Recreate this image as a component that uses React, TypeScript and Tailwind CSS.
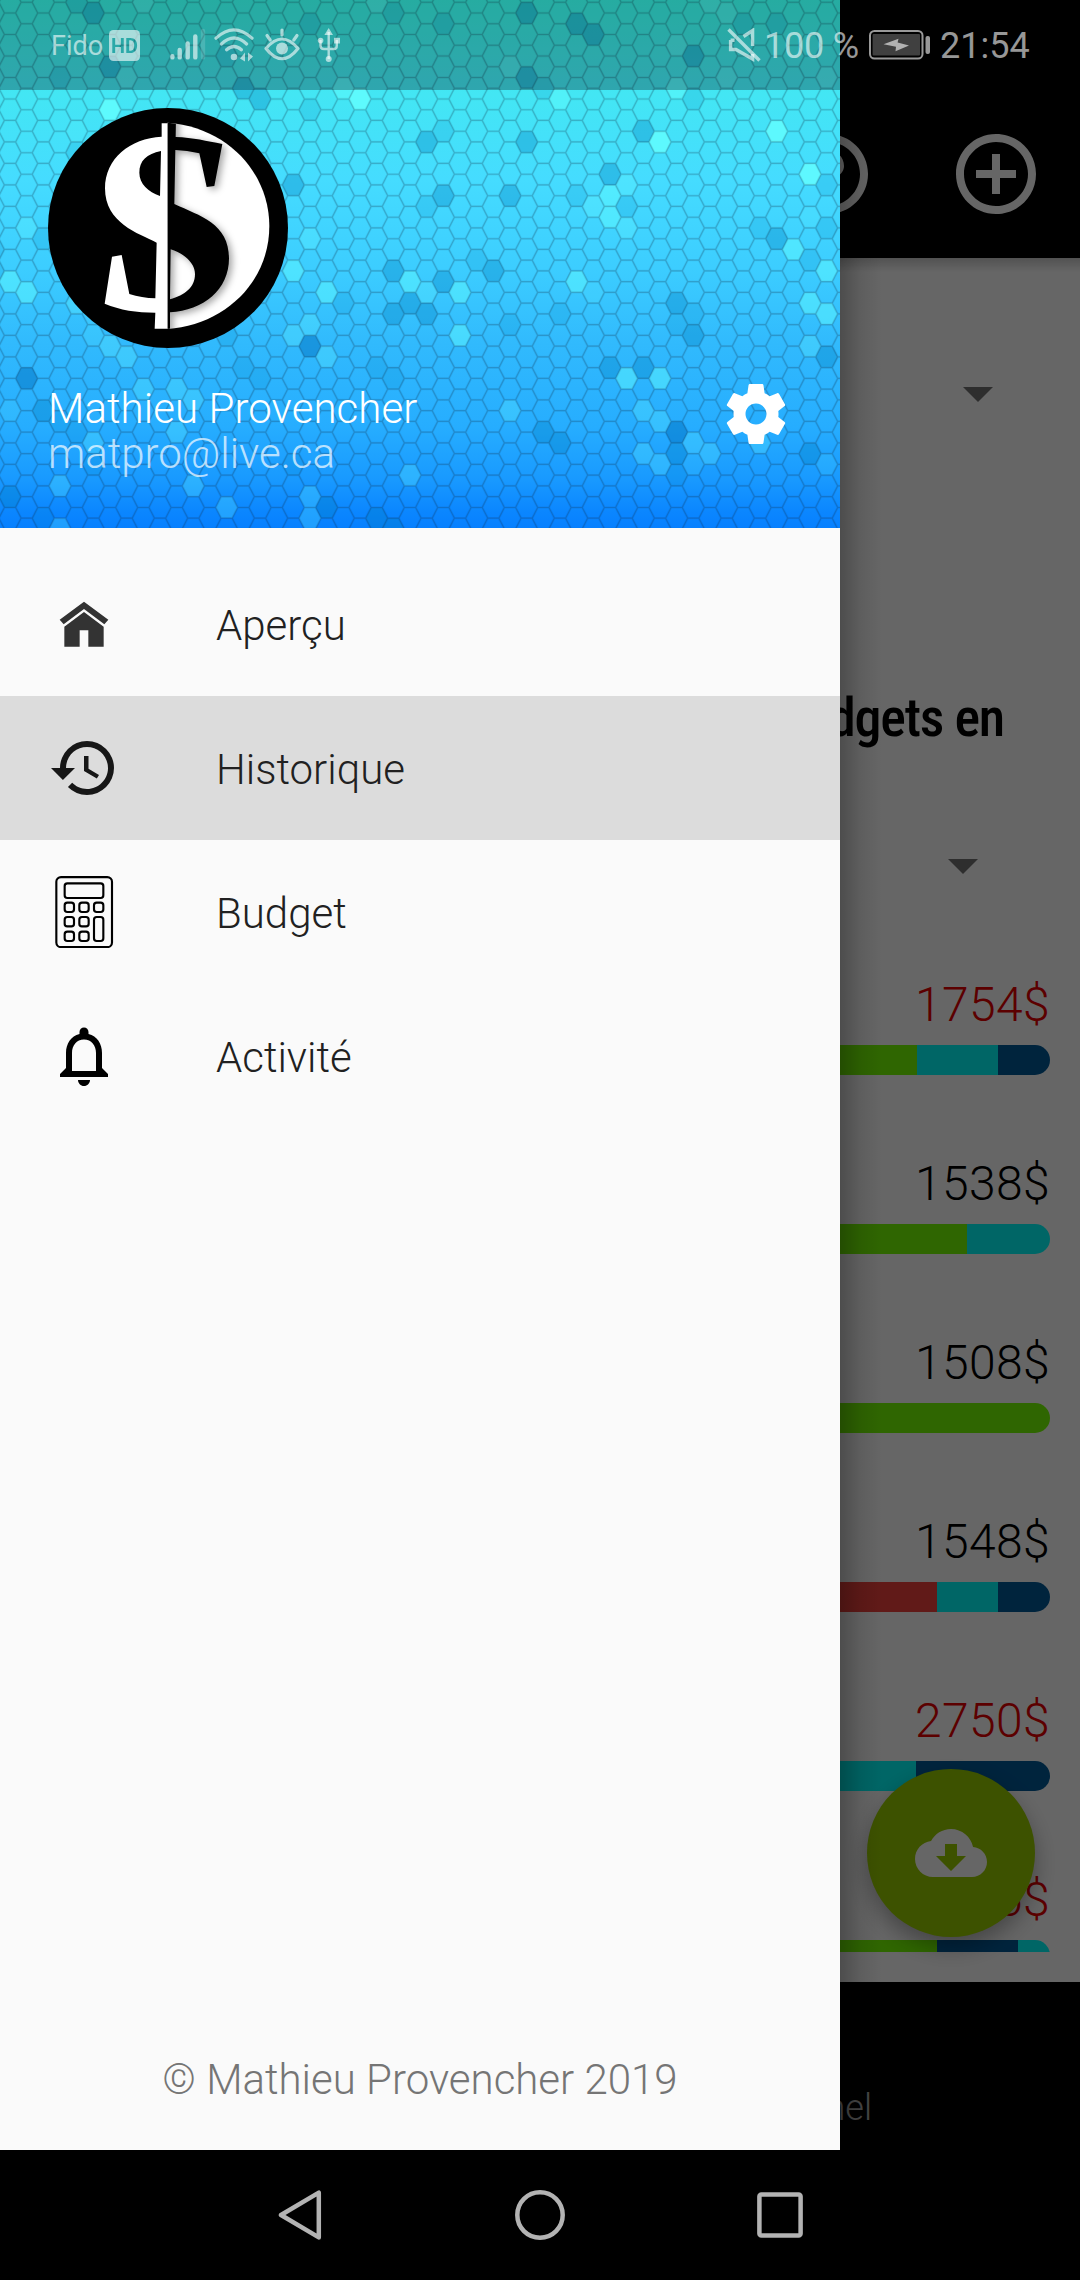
import React from "react";

type Tone = "d1" | "d2" | "d3" | "l0" | "l1" | "l2" | "l3";

const COL = 50 / 3;
const ROW = 21.5;

const toneFill: Record<Tone, string> = {
  d1: "rgba(0,130,190,0.16)",
  d2: "rgba(0,125,190,0.32)",
  d3: "rgba(0,110,190,0.48)",
  l0: "rgba(110,255,255,0.12)",
  l1: "rgba(110,255,255,0.24)",
  l2: "rgba(100,255,255,0.45)",
  l3: "rgba(100,255,255,0.8)",
};

/* Approximate centres of the cells that differ from the gradient. */
const cells: Record<Tone, number[][]> = {
  d1: [
    [77, 3], [310, 24], [393, 13], [60, 78], [227, 57], [310, 110], [77, 152], [43, 238], [-7, 249],
    [443, 24], [777, 24], [743, 24], [543, 88], [693, 99], [443, 130], [627, 207], [427, 206],
    [577, 196], [827, 185], [760, 228], [827, 227], [810, 260], [477, 260], [-7, 270], [343, 302],
    [227, 337], [243, 367], [260, 378], [377, 367], [393, 378], [77, 432], [60, 423], [93, 463],
    [293, 463], [43, 518], [510, 323], [560, 313], [693, 313], [677, 323], [677, 473],
  ],
  d2: [
    [93, 13], [110, 68], [243, 88], [260, 99], [293, 185], [527, 13], [577, 24], [593, 35], [693, 56],
    [527, 78], [643, 130], [427, 142], [527, 142], [610, 174], [443, 196], [510, 196], [777, 238],
    [493, 268], [393, 270], [443, 281], [410, 302], [393, 312], [427, 312], [43, 410], [327, 507],
    [377, 518], [393, 527], [10, 497], [677, 303], [693, 335], [610, 367], [643, 367], [543, 432],
    [560, 442], [677, 453], [827, 357], [810, 453],
  ],
  d3: [[310, 346], [27, 378], [677, 432]],
  l0: [
    [77, 132], [810, 217], [10, 410], [593, 293], [693, 463], [827, 463], [93, 317], [93, 335],
  ],
  l1: [
    [143, 3], [127, 78], [377, 3], [27, 228], [310, 237], [710, 3], [727, 13], [677, 46], [510, 68],
    [727, 78], [827, 78], [627, 185], [593, 207], [627, 228], [427, 292], [310, 323], [293, 334],
    [327, 357], [77, 302], [110, 346], [127, 357], [143, 388], [177, 388], [193, 398], [177, 430],
    [93, 440], [60, 485], [193, 485], [410, 475], [227, 507], [310, 497], [310, 518], [60, 527],
    [810, 345], [510, 410], [643, 410], [660, 421], [693, 442], [643, 453], [660, 464], [710, 453],
    [760, 447],
  ],
  l2: [
    [343, 88], [677, 88], [560, 99], [610, 196], [610, 217], [793, 249], [827, 269], [10, 281],
    [27, 292], [293, 270], [327, 292], [410, 281], [460, 293], [577, 282], [460, 336], [627, 378],
    [660, 378], [810, 303], [827, 313],
  ],
  l3: [[110, 110], [360, 99], [660, 142], [777, 130], [810, 174]],
};

const originY = (c: number) => (Math.abs(c) % 2 === 0 ? 88.2 : 98.9) - 5 * ROW;

function hexAt(cx: number, cy: number) {
  const f = (n: number) => n.toFixed(1);
  return `M${f(cx - 11.1)} ${f(cy)}L${f(cx - 5.6)} ${f(cy - 10.75)}H${f(cx + 5.6)}L${f(cx + 11.1)} ${f(cy)}L${f(cx + 5.6)} ${f(cy + 10.75)}H${f(cx - 5.6)}Z`;
}

function snapped([x, y]: number[]) {
  const c = Math.round((x - 10) / COL);
  const r = Math.round((y - originY(c)) / ROW);
  return hexAt(10 + c * COL, originY(c) + r * ROW);
}

/* Three edges per cell are enough to draw the whole mesh. */
const mesh = (() => {
  let d = "";
  for (let c = -1; c < 51; c++) {
    for (let r = 0; r < 27; r++) {
      const x = 10 + c * COL;
      const y = originY(c) + r * ROW;
      d += `M${(x + 5.6).toFixed(1)} ${(y - 10.75).toFixed(1)}H${(x - 5.6).toFixed(1)}L${(x - 11.1).toFixed(1)} ${y.toFixed(1)}L${(x - 5.6).toFixed(1)} ${(y + 10.75).toFixed(1)}`;
    }
  }
  return d;
})();

function HoneycombBackdrop() {
  return (
    <svg className="absolute inset-0" width="840" height="528" viewBox="0 0 840 528">
      <defs>
        <linearGradient id="sky" x1="0" y1="0" x2="0" y2="1">
          <stop offset="0" stopColor="#35efe0" />
          <stop offset="0.18" stopColor="#43e6f4" />
          <stop offset="0.34" stopColor="#45dcff" />
          <stop offset="0.51" stopColor="#3ccdff" />
          <stop offset="0.65" stopColor="#31bafd" />
          <stop offset="0.81" stopColor="#26adff" />
          <stop offset="0.91" stopColor="#1899ff" />
          <stop offset="0.97" stopColor="#0b86ff" />
          <stop offset="1" stopColor="#0780ff" />
        </linearGradient>
      </defs>
      <rect width="840" height="528" fill="url(#sky)" />
      {(Object.keys(cells) as Tone[]).map((tone) => (
        <path key={tone} d={cells[tone].map(snapped).join("")} fill={toneFill[tone]} />
      ))}
      <path d={mesh} fill="none" stroke="rgba(20,50,80,0.08)" strokeWidth="2.4" />
      <path d={mesh} fill="none" stroke="rgba(20,40,60,0.2)" strokeWidth="1.1" />
    </svg>
  );
}

function Avatar() {
  return (
    <svg width="240" height="240" viewBox="144 54 720 720">
      <defs>
        <clipPath id="moon">
          <path d="M502 98C690 112 808 255 808 408C808 580 670 705 502 717Z" />
        </clipPath>
        <filter id="soft" x="-20%" y="-20%" width="150%" height="150%">
          <feDropShadow dx="10" dy="8" stdDeviation="11" floodColor="#000" floodOpacity="0.35" />
        </filter>
      </defs>
      <circle cx="504" cy="414" r="360" fill="#000" />
      <path d="M502 98C690 112 808 255 808 408C808 580 670 705 502 717Z" fill="#fff" />
      <g clipPath="url(#moon)">
        <path
          filter="url(#soft)"
          d="M480 80H528L527 141C580 143 620 153 667 162L643 288L620 291L598 190Q560 181 526 180L523 342C600 378 687 400 687 505C687 600 610 662 510 667L510 730H480Z M512 478L510 628C555 615 585 592 585 552C585 518 550 490 512 478Z"
          fillRule="evenodd"
          fill="#000"
        />
      </g>
      <path
        d="M485 100H502V716H464L466 668C410 668 360 660 314 641L336 500L365 495L388 612Q425 624 466 625L470 458C415 430 315 400 315 295C315 205 390 145 485 140Z M483 183C440 192 418 212 418 248C418 282 445 305 480 318Z"
        fillRule="evenodd"
        fill="#fff"
      />
    </svg>
  );
}

function Icon({ d, size, className }: { d: string; size: number; className?: string }) {
  return (
    <svg width={size} height={size} viewBox="0 0 24 24" fill="currentColor" className={className}>
      <path d={d} />
    </svg>
  );
}

const paths = {
  help: "M11 18h2v-2h-2v2zm1-16C6.48 2 2 6.48 2 12s4.48 10 10 10 10-4.48 10-10S17.52 2 12 2zm0 18c-4.41 0-8-3.59-8-8s3.59-8 8-8 8 3.59 8 8-3.59 8-8 8zm0-14c-2.21 0-4 1.79-4 4h2c0-1.1.9-2 2-2s2 .9 2 2c0 2-3 1.75-3 5h2c0-2.25 3-2.5 3-5 0-2.21-1.79-4-4-4z",
  add: "M13 7h-2v4H7v2h4v4h2v-4h4v-2h-4V7zm-1-5C6.48 2 2 6.48 2 12s4.48 10 10 10 10-4.48 10-10S17.52 2 12 2zm0 18c-4.41 0-8-3.59-8-8s3.59-8 8-8 8 3.59 8 8-3.59 8-8 8z",
  cloud: "M19.35 10.04C18.67 6.59 15.64 4 12 4 9.11 4 6.6 5.64 5.35 8.04 2.34 8.36 0 10.91 0 14c0 3.31 2.69 6 6 6h13c2.76 0 5-2.24 5-5 0-2.64-2.05-4.78-4.65-4.96zM17 13l-5 5-5-5h3V9h4v4h3z",
  gear: "M19.43 12.98c.04-.32.07-.64.07-.98s-.03-.66-.07-.98l2.11-1.65c.19-.15.24-.42.12-.64l-2-3.46c-.12-.22-.39-.3-.61-.22l-2.49 1c-.52-.4-1.08-.73-1.69-.98l-.38-2.65C14.46 2.18 14.25 2 14 2h-4c-.25 0-.46.18-.49.42l-.38 2.65c-.61.25-1.17.59-1.69.98l-2.49-1c-.23-.09-.49 0-.61.22l-2 3.46c-.13.22-.07.49.12.64l2.11 1.65c-.04.32-.07.65-.07.98s.03.66.07.98l-2.11 1.65c-.19.15-.24.42-.12.64l2 3.46c.12.22.39.3.61.22l2.49-1c.52.4 1.08.73 1.69.98l.38 2.65c.03.24.24.42.49.42h4c.25 0 .46-.18.49-.42l.38-2.65c.61-.25 1.17-.59 1.69-.98l2.49 1c.23.09.49 0 .61-.22l2-3.46c.12-.22.07-.49-.12-.64l-2.11-1.65zM12 15.5c-1.93 0-3.5-1.57-3.5-3.5s1.57-3.5 3.5-3.5 3.5 1.57 3.5 3.5-1.57 3.5-3.5 3.5z",
  history: "M13 3a9 9 0 0 0-9 9H1l3.89 3.89.07.14L9 12H6c0-3.87 3.13-7 7-7s7 3.13 7 7-3.13 7-7 7c-1.93 0-3.68-.79-4.94-2.06l-1.42 1.42A8.954 8.954 0 0 0 13 21a9 9 0 0 0 0-18zm-1 5v5l4.28 2.54.72-1.21-3.5-2.08V8H12z",
  bell: "M12 22c1.1 0 2-.9 2-2h-4c0 1.1.9 2 2 2zm6-6v-5c0-3.07-1.63-5.64-4.5-6.32V4c0-.83-.67-1.5-1.5-1.5s-1.5.67-1.5 1.5v.68C7.64 5.36 6 7.92 6 11v5l-2 2v1h16v-1l-2-2zm-2 1H8v-6c0-2.48 1.51-4.5 4-4.5s4 2.02 4 4.5v6z",
};

function HomeIcon() {
  return (
    <svg width="72" height="72" viewBox="0 0 216 216" fill="#333333">
      <path d="M108 41L181 95L169 109L108 63L47 109L35 95Z" />
      <path d="M108 72L167 116V176H121V127H95V176H49V116Z" />
    </svg>
  );
}

function CalculatorIcon() {
  const keys = [
    [47, 77, 34, 34], [91, 77, 34, 34], [135, 77, 34, 34],
    [47, 120, 34, 34], [91, 120, 34, 34], [135, 120, 34, 78],
    [47, 164, 34, 34], [91, 164, 34, 34],
  ];
  return (
    <svg width="72" height="72" viewBox="0 0 216 216" fill="none" stroke="#000" strokeWidth="6.4">
      <rect x="25" y="3.2" width="167" height="210" rx="14" />
      <rect x="50" y="22" width="116" height="44" rx="8" />
      {keys.map(([x, y, w, h]) => (
        <rect key={`${x}-${y}`} x={x + 3} y={y + 3} width={w - 6} height={h - 6} rx="8" />
      ))}
    </svg>
  );
}

const menu = [
  { label: "Aperçu", icon: <HomeIcon /> },
  { label: "Historique", icon: <Icon d={paths.history} size={72} className="text-[#171717]" />, active: true },
  { label: "Budget", icon: <CalculatorIcon /> },
  { label: "Activité", icon: <Icon d={paths.bell} size={72} className="text-black" /> },
];

function StatusBar() {
  return (
    <div className="absolute inset-x-0 top-0 flex h-[90px] items-center text-white/60">
      <div className="flex h-full w-[840px] items-center bg-black/[0.28] pl-[51px]">
        <span className="w-[58px] pt-0.5 text-[27px] leading-[88px]">Fido</span>
        <svg width="31" height="31" viewBox="0 0 31 31" className="opacity-60">
          <mask id="hd">
            <rect width="31" height="31" rx="4.5" fill="#fff" />
            <text x="15.5" y="22.8" textAnchor="middle" textLength="27" lengthAdjust="spacingAndGlyphs" fontFamily="Roboto" fontWeight="700" fontSize="21" fill="#000">
              HD
            </text>
          </mask>
          <rect width="31" height="31" fill="#fff" mask="url(#hd)" />
        </svg>
        <svg width="36" height="34" viewBox="0 0 36 34" className="ml-[30px]" fill="currentColor" stroke="currentColor" strokeWidth="4.4" strokeLinecap="round">
          <path fill="none" d="M2.4 28.3V29.4M9.7 22V29.4M17.7 15.5V29.4M25.3 8.5V29.4" />
          <path fill="none" opacity="0.25" d="M33 3V29.4" />
        </svg>
        <svg width="40" height="36" viewBox="0 0 40 36" className="ml-[8px]" fill="none" stroke="currentColor" strokeWidth="3.2" strokeLinecap="round">
          <path d="M2 11.2Q20 -5.5 38 11.2M7.4 17Q20 5 32.6 17M12.6 22.8Q20 16.2 27.4 22.8" />
          <circle cx="20" cy="30" r="3.3" fill="currentColor" stroke="none" />
          <path d="M31 25.5V34.5L26 31.5ZM34 34.5V25.5L39 29.5Z" fill="currentColor" stroke="none" />
        </svg>
        <svg width="36" height="34" viewBox="0 0 36 34" className="ml-[10px]" fill="none" stroke="currentColor" strokeWidth="3.2" strokeLinecap="round">
          <path d="M2 20.5Q18 1.5 34 20.5Q18 41 2 20.5Z" strokeLinejoin="round" />
          <circle cx="18" cy="20.5" r="6" fill="currentColor" stroke="none" />
          <path d="M18 2V7M3 7.5L6.2 12M33 7.5L29.8 12" />
        </svg>
        <svg width="24" height="34" viewBox="0 0 24 34" className="ml-[17px]" fill="none" stroke="currentColor" strokeWidth="2.4">
          <path d="M11.7 4V31M3.5 12V17.5Q3.5 21 7 21H17Q19.8 21 19.8 17.5V12" />
          <path d="M11.7 0L16 7H7.4Z" fill="currentColor" stroke="none" />
          <circle cx="11.7" cy="31" r="3" fill="currentColor" stroke="none" />
          <circle cx="3.6" cy="12.6" r="2.8" fill="currentColor" stroke="none" />
          <path d="M17 9.8H23V15.5H17Z" fill="currentColor" stroke="none" />
        </svg>
        <svg width="34" height="34" viewBox="0 0 34 34" className="ml-[386px]" fill="none" stroke="currentColor" strokeWidth="3.4">
          <path d="M1.5 1.5L32.5 32.5" />
          <path d="M16.5 8.5L25.6 2.5V18M3.6 12V21.5H9L25.6 31V26M3.6 12.2H7.6" />
        </svg>
      </div>
      <div className="-ml-[76px] flex items-center">
        <span className="w-[105px] pt-0.5 text-[36px] leading-[88px] -tracking-[0.2px]">100 %</span>
        <svg width="62" height="30" viewBox="0 0 62 30" fill="none">
          <rect x="1" y="1" width="52.5" height="27.5" rx="4.5" stroke="currentColor" strokeWidth="2" />
          <rect x="3.6" y="4" width="47.4" height="21.5" rx="1" fill="#fff" fillOpacity="0.25" />
          <path d="M14.5 14.2L29.5 8.8L28.6 12.6L40 15.6L26.5 21.2L27 16.8Z" fill="currentColor" />
          <rect x="56.5" y="6" width="4.5" height="18" rx="2" fill="currentColor" />
        </svg>
        <span className="ml-[9px] pt-0.5 text-[36px] leading-[88px]">21:54</span>
      </div>
    </div>
  );
}

type Segment = [string, number];

const budgets: { amount: string; over?: boolean; segments: Segment[] }[] = [
  { amount: "1754$", over: true, segments: [["#76ff03", 887], ["#00ffff", 81], ["#005a99", 52]] },
  { amount: "1538$", segments: [["#76ff03", 937], ["#00ffff", 83]] },
  { amount: "1508$", segments: [["#76ff03", 1020]] },
  { amount: "1548$", segments: [["#f2433c", 907], ["#00ffff", 61], ["#005a99", 52]] },
  { amount: "2750$", over: true, segments: [["#00ffff", 886], ["#005a99", 134]] },
  { amount: "1656$", over: true, segments: [["#76ff03", 907], ["#005a99", 81], ["#00ffff", 32]] },
];

function Caret() {
  return (
    <svg width="30" height="15" viewBox="0 0 30 15">
      <path d="M0 0H30L15 15Z" fill="#747474" />
    </svg>
  );
}

function BudgetScreen() {
  return (
    <div className="flex h-[2150px] flex-col bg-white">
      <div className="flex h-[258px] items-end justify-end gap-[72px] bg-black pr-9 pb-9 text-white">
        <Icon d={paths.help} size={96} />
        <Icon d={paths.add} size={96} />
      </div>
      <div className="h-[14px] shrink-0 bg-linear-to-b from-black/20 to-transparent" />
      <div className="mt-[61px] flex h-[123px] shrink-0 items-center justify-end pr-[87px]">
        <Caret />
      </div>
      <div className="mt-[230px] h-[63px] shrink-0 pr-[76px] text-right text-[54px] leading-[64px] font-medium -tracking-[1.2px] font-stretch-condensed text-black">
        budgets en
      </div>
      <div className="mt-[56px] flex h-[123px] shrink-0 items-center justify-end pr-[102px]">
        <Caret />
      </div>
      <div className="mt-[49px] flex h-[975px] shrink-0 flex-col gap-[81px] overflow-hidden px-[30px]">
        {budgets.map((b) => (
          <div key={b.amount} className="flex shrink-0 flex-col gap-3">
            <span className={`text-right text-[48px] leading-[56px] font-light tracking-[0.4px] ${b.over ? "text-[#e60000]" : "text-black"}`}>
              {b.amount}
            </span>
            <div className="flex h-[30px] overflow-hidden rounded-full">
              {b.segments.map(([color, width], i) => (
                <div key={i} style={{ width, backgroundColor: color }} />
              ))}
            </div>
          </div>
        ))}
      </div>
      <div className="mt-[30px] flex h-[168px] shrink-0 items-end justify-end bg-black pr-[208px] pb-5">
        <span className="text-[36px] leading-[44px] font-light text-white/70">Personnel</span>
      </div>
      <div className="absolute top-[1769px] left-[867px] flex size-[168px] items-center justify-center rounded-full bg-[#99cc00] text-white shadow-[0_10px_22px_rgba(0,0,0,0.32)]">
        <Icon d={paths.cloud} size={72} />
      </div>
    </div>
  );
}

function Drawer() {
  return (
    <aside className="absolute top-0 left-0 flex h-[2150px] w-[840px] flex-col bg-[#fafafa]">
      <header className="relative h-[528px] shrink-0">
        <HoneycombBackdrop />
        <div className="relative flex h-full flex-col px-12 pt-[108px] font-light">
          <Avatar />
          <div className="mt-[35px] flex justify-between">
            <div>
              <div className="h-[45px] text-[42px] leading-[52px] tracking-[0.08px] text-white">Mathieu Provencher</div>
              <div className="text-[42px] leading-[52px] text-white/70">matpro@live.ca</div>
            </div>
            <Icon d={paths.gear} size={72} className="-mt-[5px] text-white" />
          </div>
        </div>
      </header>
      <nav className="flex flex-col pt-6">
        {menu.map((m) => (
          <div key={m.label} className={`flex h-36 items-center gap-24 px-12 ${m.active ? "bg-[#dcdcdc]" : ""}`}>
            {m.icon}
            <span className="pt-1 text-[42px] leading-[60px] font-light text-[#212121]">{m.label}</span>
          </div>
        ))}
      </nav>
      <div className="mt-auto pb-10 text-center text-[42px] leading-[60px] font-light text-[#757575]">
        © Mathieu Provencher 2019
      </div>
    </aside>
  );
}

export default function App() {
  return (
    <div className="relative flex h-[2280px] w-[1080px] flex-col overflow-hidden bg-black font-[Roboto,sans-serif]">
      <BudgetScreen />
      <div className="absolute inset-x-0 top-0 h-[2150px] bg-black/60" />
      <div className="absolute top-0 left-[840px] h-[2150px] w-[42px] bg-linear-to-r from-black/25 via-black/8 to-transparent" />
      <Drawer />
      <StatusBar />
      <div className="flex h-[130px] items-center justify-center gap-[190px] bg-black text-[#b3b3b3]">
        <svg width="50" height="50" viewBox="0 0 50 50" fill="none" stroke="currentColor" strokeWidth="4.5" strokeLinejoin="round">
          <path d="M43.8 2.6V47.4L6 25Z" />
        </svg>
        <svg width="50" height="50" viewBox="0 0 50 50" fill="none" stroke="currentColor" strokeWidth="4.5">
          <circle cx="25" cy="25" r="22.7" />
        </svg>
        <svg width="50" height="50" viewBox="0 0 50 50" fill="none" stroke="currentColor" strokeWidth="4.5">
          <rect x="4.4" y="4.4" width="41.2" height="41.2" rx="2" />
        </svg>
      </div>
    </div>
  );
}
